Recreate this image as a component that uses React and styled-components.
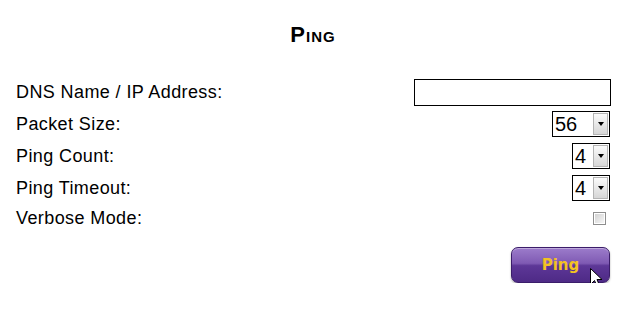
import React from "react";
import styled, { createGlobalStyle } from "styled-components";

const GlobalStyle = createGlobalStyle`
  html, body {
    margin: 0;
    padding: 0;
    background: #fff;
  }
  body {
    font-family: "Liberation Sans", Arial, sans-serif;
    color: #000;
  }
`;

const Page = styled.div`
  width: 629px;
  box-sizing: border-box;
  padding: 23px 19px 0 16px;
`;

const Title = styled.h2`
  margin: 0 0 29px;
  height: 24px;
  line-height: 24px;
  text-align: center;
  font-size: 22px;
  font-weight: bold;
  font-variant: small-caps;
  letter-spacing: 1px;
`;

const Form = styled.div`
  display: flex;
  flex-direction: column;
`;

const Row = styled.div`
  display: flex;
  align-items: center;
  justify-content: space-between;
  height: ${(p) => p.$h || 32}px;
`;

const Label = styled.span`
  font-size: 18px;
  letter-spacing: 0.4px;
`;

const TextInput = styled.input`
  box-sizing: border-box;
  width: 197px;
  height: 27px;
  margin-right: -1px;
  border: 1px solid #000;
  padding: 0 3px;
  font: 16px "Liberation Sans", Arial, sans-serif;
  outline: none;
`;

const Select = styled.div`
  box-sizing: border-box;
  display: flex;
  align-items: center;
  width: ${(p) => p.$w}px;
  height: 26px;
  border: 1px solid #000;
  background: #fff;
`;

const SelectValue = styled.span`
  flex: 1;
  padding-left: 2px;
  font-size: 20px;
  line-height: 24px;
`;

const SelectArrow = styled.span`
  box-sizing: border-box;
  display: flex;
  align-items: center;
  justify-content: center;
  width: 15px;
  height: 22px;
  margin-right: 1px;
  border: 1px solid #b4b4b4;
  background: linear-gradient(#fbfbfb, #d6d6d6);

  &::after {
    content: "";
    border-left: 3px solid transparent;
    border-right: 3px solid transparent;
    border-top: 4px solid #000;
  }
`;

const Check = styled.span`
  box-sizing: border-box;
  width: 13px;
  height: 13px;
  margin-right: 4px;
  border: 1px solid #8e8e8e;
  padding: 1px;
  background: #fff;

  &::after {
    content: "";
    display: block;
    width: 100%;
    height: 100%;
    background: linear-gradient(135deg, #d2d2d2, #f6f6f6);
  }
`;

const Actions = styled.div`
  display: flex;
  justify-content: flex-end;
  margin-top: 15px;
`;

const ButtonWrap = styled.div`
  position: relative;
`;

const PingButton = styled.button`
  box-sizing: border-box;
  width: 99px;
  height: 36px;
  border: 1px solid #3b1d6a;
  border-radius: 7px;
  background: linear-gradient(
    #9c7ccb 0%,
    #7f5ab3 45%,
    #5d3797 52%,
    #4e2a86 100%
  );
  box-shadow: inset 0 1px 0 rgba(255, 255, 255, 0.35),
    0 1px 2px rgba(0, 0, 0, 0.35);
  color: #f3c221;
  font: bold 15px "DejaVu Sans", Verdana, sans-serif;
  padding: 0;
  cursor: pointer;
`;

const Cursor = styled.svg`
  position: absolute;
  left: 79px;
  top: 21px;
  pointer-events: none;
`;

const Dropdown = ({ value, width }) => (
  <Select $w={width}>
    <SelectValue>{value}</SelectValue>
    <SelectArrow />
  </Select>
);

export default function App() {
  return (
    <>
      <GlobalStyle />
      <Page>
        <Title>Ping</Title>
        <Form>
          <Row>
            <Label>DNS Name / IP Address:</Label>
            <TextInput type="text" />
          </Row>
          <Row>
            <Label>Packet Size:</Label>
            <Dropdown value="56" width={58} />
          </Row>
          <Row>
            <Label>Ping Count:</Label>
            <Dropdown value="4" width={38} />
          </Row>
          <Row>
            <Label>Ping Timeout:</Label>
            <Dropdown value="4" width={38} />
          </Row>
          <Row $h={28}>
            <Label>Verbose Mode:</Label>
            <Check />
          </Row>
        </Form>
        <Actions>
          <ButtonWrap>
            <PingButton>Ping</PingButton>
            <Cursor width="13" height="21" viewBox="0 0 13 21">
              <path
                d="M0.5 0.5 L0.5 16.5 L4.5 12.5 L7.5 19.5 L10 18.5 L7 11.5 L12 11.5 Z"
                fill="#fff"
                stroke="#000"
                strokeWidth="1"
                strokeLinejoin="miter"
              />
            </Cursor>
          </ButtonWrap>
        </Actions>
      </Page>
    </>
  );
}
